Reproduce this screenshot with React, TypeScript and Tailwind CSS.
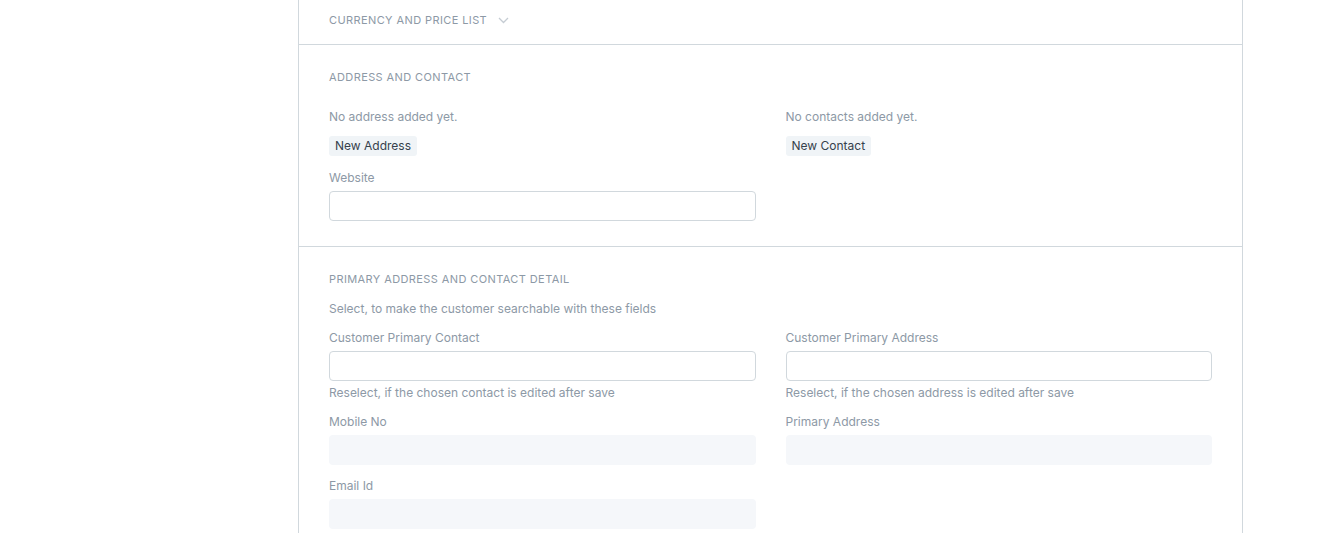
import React from "react";

const label = "text-[12px] leading-4 text-[#8d99a6]";
const heading = "text-[11px] leading-4 tracking-[0.4px] uppercase text-[#8d99a6]";

function Field({ title, help, readOnly }: { title: string; help?: string; readOnly?: boolean }) {
  return (
    <div className="flex flex-col">
      <div className={`${label} pt-[1px]`}>{title}</div>
      {readOnly ? (
        <div className="mt-[5px] h-[30px] rounded-[4px] bg-[#f5f7fa]" />
      ) : (
        <div className="mt-[5px] h-[30px] rounded-[4px] border border-[#d1d8dd] bg-white" />
      )}
      {help && <div className={`${label} mt-[4px]`}>{help}</div>}
    </div>
  );
}

function SmallButton({ children }: { children: React.ReactNode }) {
  return (
    <div className="mt-[11px] self-start h-[20px] px-[6px] rounded-[3px] bg-[#f0f4f7] text-[12px] leading-5 text-[#36414c]">
      {children}
    </div>
  );
}

export default function App() {
  return (
    <div className="min-h-screen bg-white font-['Inter','Liberation_Sans',sans-serif]">
      <div className="ml-[298px] w-[945px] border-x border-[#d1d8dd]">
        {/* currency */}
        <div className="h-[45px] border-b border-[#d1d8dd] px-[30px] pt-[12px]">
          <div className="flex items-center gap-[11px]">
            <span className={heading}>Currency and Price List</span>
            <svg width="11" height="7" viewBox="0 0 11 7" fill="none">
              <path d="M1 1L5.5 5.5L10 1" stroke="#c5ccd3" strokeWidth="1.3" />
            </svg>
          </div>
        </div>

        {/* address and contact */}
        <div className="border-b border-[#d1d8dd] px-[30px] pt-[24px] pb-[25px]">
          <div className={heading}>Address and Contact</div>
          <div className="mt-[24px] grid grid-cols-2 gap-x-[30px]">
            <div className="flex flex-col">
              <div className={label}>No address added yet.</div>
              <SmallButton>New Address</SmallButton>
              <div className="mt-[13px]">
                <Field title="Website" />
              </div>
            </div>
            <div className="flex flex-col">
              <div className={label}>No contacts added yet.</div>
              <SmallButton>New Contact</SmallButton>
            </div>
          </div>
        </div>

        {/* primary address */}
        <div className="px-[30px] pt-[24px] pb-[10px]">
          <div className={heading}>Primary Address and Contact Detail</div>
          <div className={`${label} mt-[14px]`}>Select, to make the customer searchable with these fields</div>
          <div className="mt-[12px] grid grid-cols-2 gap-x-[30px]">
            <div className="flex flex-col gap-[12px]">
              <Field title="Customer Primary Contact" help="Reselect, if the chosen contact is edited after save" />
              <Field title="Mobile No" readOnly />
              <Field title="Email Id" readOnly />
            </div>
            <div className="flex flex-col gap-[12px]">
              <Field title="Customer Primary Address" help="Reselect, if the chosen address is edited after save" />
              <Field title="Primary Address" readOnly />
            </div>
          </div>
        </div>
      </div>
    </div>
  );
}
